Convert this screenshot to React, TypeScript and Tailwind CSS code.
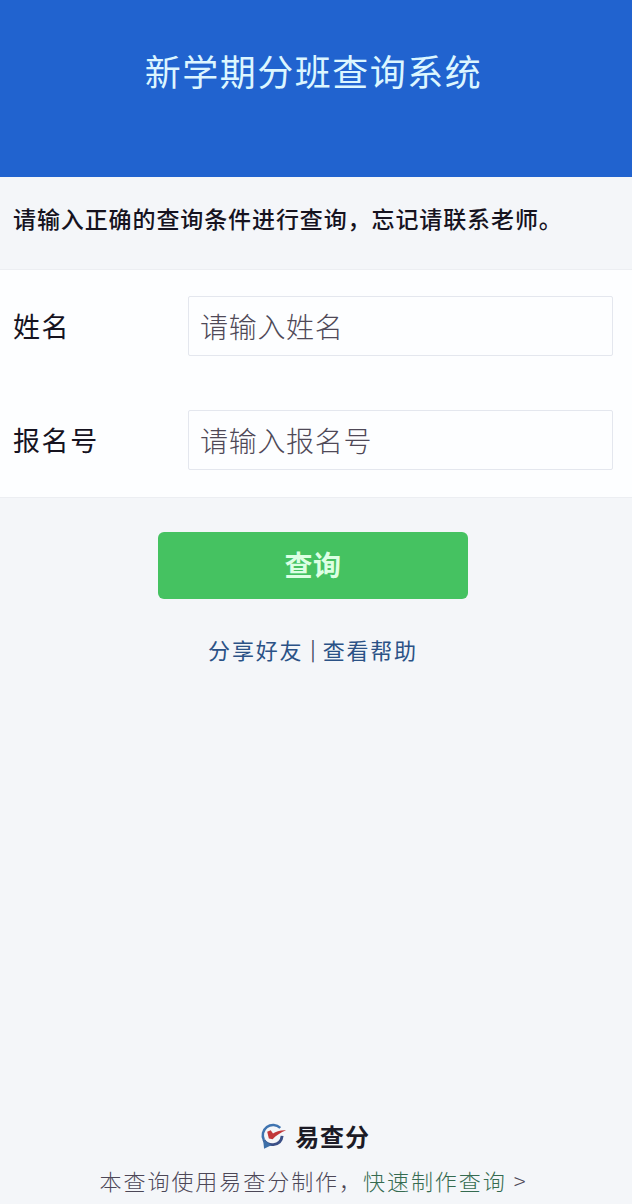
import { useState } from "react";

interface Field {
  id: string; label: string; placeholder: string;
}

const FIELDS: Field[] = [
  { id: "name", label: "姓名", placeholder: "请输入姓名" },
  { id: "number", label: "报名号", placeholder: "请输入报名号" },
];

function Logo() {
  return (
    <svg width="30" height="28" viewBox="0 0 28 27" fill="none">
      <path d="M21 5.6A10 10 0 0 0 5.2 17.4" stroke="#3f74b0" strokeWidth="2.4" />
      <path d="M5.2 17.4C7.4 23.4 21.6 24.4 22.8 13.4" stroke="#3b4f86" strokeWidth="2.8" />
      <path d="M4.4 16.5L5.4 25.8L12.4 22.4Z" fill="#3d6fa8" />
      <path d="M8.4 9.4L11.8 8L14 11.2C17 9 21.6 7.6 26.6 8C21.5 10.2 16.8 13 13.6 16.6L10 16Z" fill="#c2383a" />
    </svg>
  );
}

export default function App() {
  const [values, setValues] = useState<Record<string, string>>({});

  return (
    <div className="flex h-[1204px] w-full flex-col bg-[#f4f6f9] font-['Noto_Sans_CJK_SC',sans-serif]">
      <header className="flex h-[177px] shrink-0 justify-center bg-[#2163cf] pr-[5px] pt-[43px]">
        <h1 className="text-[36px] leading-[54px] tracking-[1.5px] text-[#dcf6ff]">新学期分班查询系统</h1>
      </header>

      <p className="h-[92px] shrink-0 whitespace-nowrap pl-[13px] pt-[23px] text-[23px] font-medium leading-[36px] tracking-[0.9px] text-[#16131f]">
        请输入正确的查询条件进行查询，忘记请联系老师。
      </p>

      <form className="flex h-[229px] shrink-0 flex-col gap-[54px] border-y border-[#eceef2] bg-[#fdfeff] pt-[26px]">
        {FIELDS.map(f => (
          <div key={f.id} className="flex h-[60px] items-center pl-[13px] pr-[19px]">
            <label htmlFor={f.id} className="w-[175px] text-[27px] leading-[40px] tracking-[1.6px] text-[#16131f]">{f.label}</label>
            <input
              id={f.id}
              value={values[f.id] ?? ""}
              onChange={e => setValues({ ...values, [f.id]: e.target.value })}
              placeholder={f.placeholder}
              className="h-[60px] min-w-0 flex-1 rounded-[2px] border border-[#e4e7ee] bg-[#fdfeff] px-[11px] pb-[1px] text-[28px] font-light tracking-[0.7px] text-[#16131f] placeholder:text-[#4f4957] focus:outline-none"
            />
          </div>
        ))}
      </form>

      <div className="flex flex-col items-center pr-[6px] pt-[34px]">
        <button type="button" className="h-[67px] w-[310px] rounded-md bg-[#45c261] pb-[3px] text-[28px] font-bold tracking-[0.5px] text-[#dcffe3]">查询</button>
        <div className="mt-[32px] flex gap-[7px] text-[22px] leading-[36px] tracking-[1.8px] text-[#2b5286]">
          <a href="#share">分享好友</a>
          <span className="text-[20px] tracking-normal text-[#3c4560]">|</span>
          <a href="#help">查看帮助</a>
        </div>
      </div>

      <footer className="mt-auto flex flex-col items-center pr-[5px]">
        <div className="flex items-center gap-[7px] pl-[1px] text-[24px] font-bold leading-[36px] tracking-[0.8px] text-[#1c1b26]">
          <Logo />
          <span>易查分</span>
        </div>
        <p className="mb-[6px] mt-[8px] whitespace-nowrap text-[22px] font-light leading-[36px] tracking-[1.95px] text-[#4c4757]">
          本查询使用易查分制作，<a href="#make" className="text-[#356b50]">快速制作查询</a>
          <span className="ml-[7px]">&gt;</span>
        </p>
      </footer>
    </div>
  );
}
